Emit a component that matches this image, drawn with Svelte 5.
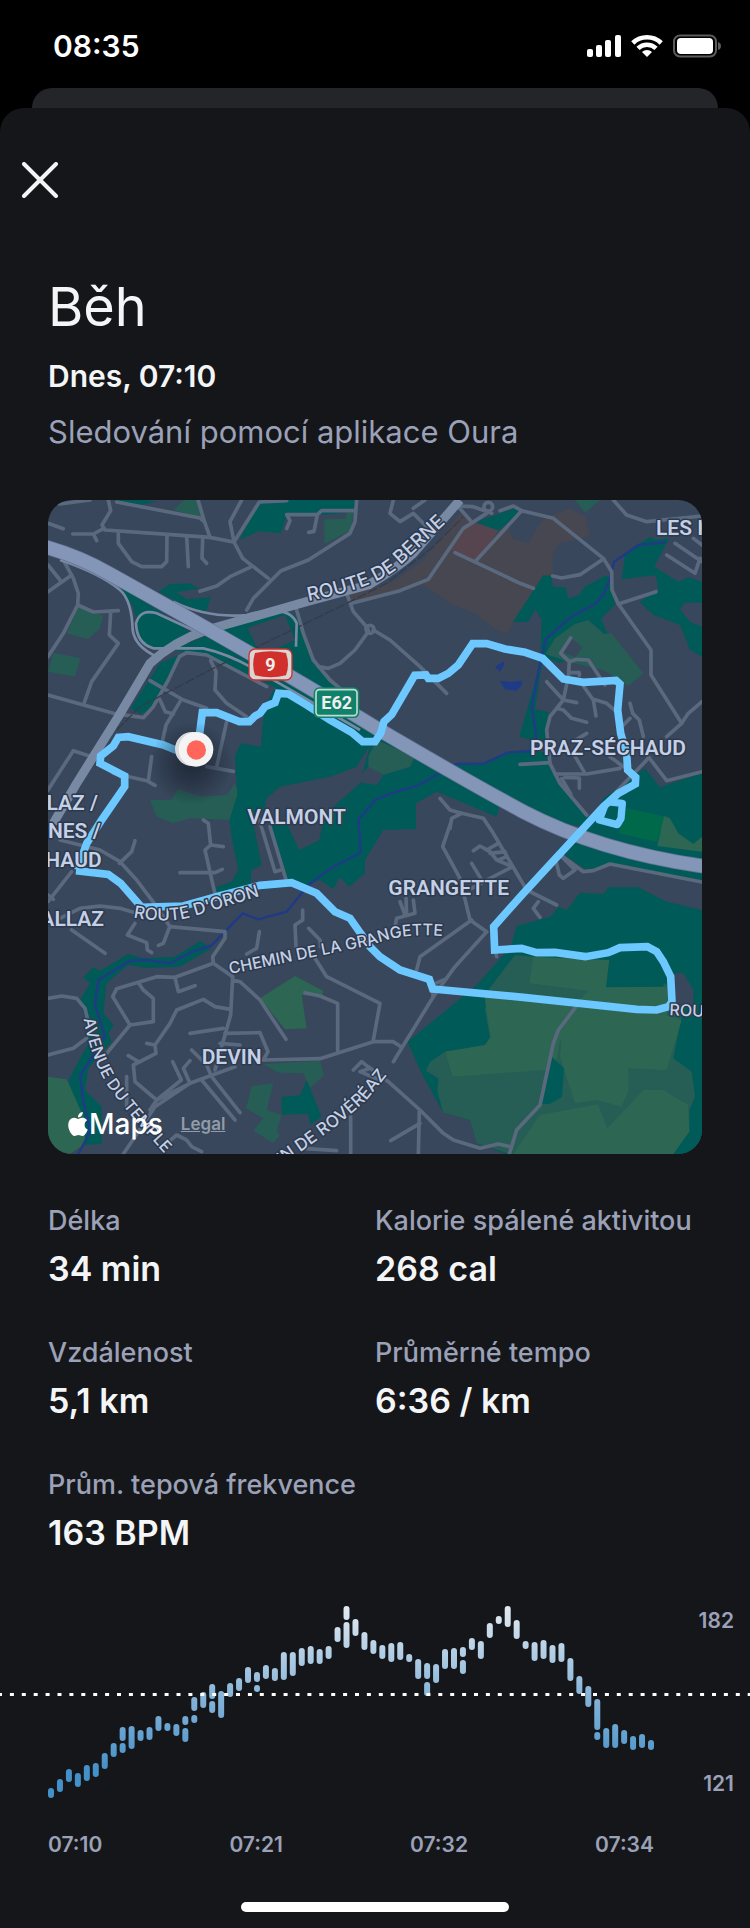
<script lang="ts">
  interface Shape {
    fill: string;
    points: string;
  }

  const stats = [
    { label: "Délka", value: "34 min" },
    { label: "Kalorie spálené aktivitou", value: "268 cal" },
    { label: "Vzdálenost", value: "5,1 km" },
    { label: "Průměrné tempo", value: "6:36 / km" },
    { label: "Prům. tepová frekvence", value: "163 BPM" },
  ];

  const times = ["07:10", "07:21", "07:32", "07:34"];

  // one entry per column, each a list of [top, bottom] ranges
  const heartRate: number[][][] = [
    [[188, 198]], [[179, 192]], [[169, 182]], [[173, 187]], [[165, 181]],
    [[163, 177]], [[153, 169]], [[143, 157]], [[127, 141], [143, 153]],
    [[126, 149]], [[130, 141]], [[127, 140]], [[116, 131]], [[123, 131]],
    [[124, 136]], [[116, 125], [128, 142]], [[97, 111], [115, 123]],
    [[92, 108]], [[84, 99], [101, 113]], [[91, 118]], [[83, 97]],
    [[78, 91]], [[67, 83]], [[72, 82], [85, 92]], [[65, 79]], [[68, 81]],
    [[52, 80]], [[52, 76]], [[48, 66]], [[46, 64]], [[49, 64]], [[46, 59]],
    [[27, 42]], [[6, 20], [22, 48]], [[19, 36]], [[32, 50]], [[40, 54]],
    [[45, 59]], [[43, 62]], [[42, 60]], [[54, 62]], [[59, 79]],
    [[63, 79], [82, 96]], [[64, 83]], [[49, 69]], [[48, 69]],
    [[47, 57], [60, 74]], [[38, 50]], [[41, 59]], [[23, 38]], [[16, 24]],
    [[6, 27]], [[20, 39]], [[41, 49]], [[42, 61]], [[40, 59]], [[45, 63]],
    [[43, 62]], [[58, 81]], [[76, 94]], [[86, 107]], [[99, 130], [132, 140]],
    [[128, 148]], [[124, 148]], [[130, 144]], [[136, 150]], [[134, 148]],
    [[140, 150]],
  ];
  const columnX = (i: number) => 48 + (i * 600) / (heartRate.length - 1);

  const LAND = "#38475c";
  const WOOD = "#005b58";
  const PARK = "#265d55";
  const FIELD = "#2d6653";
  const BUILT = "#464750";

  const areas: Shape[] = [
    { fill: WOOD, points: "598,150 658,36 700,30 946,30 940,66 850,74 742,74 722,130 655,124" },
    { fill: PARK, points: "853,88 918,86 920,70 940,66 935,120 853,162" },
    { fill: PARK, points: "400,60 432,30 474,30 490,84" },
    { fill: WOOD, points: "220,30 310,30 352,36 300,44" },
    { fill: WOOD, points: "355,305 390,282 450,280 478,296 512,322 498,366 430,345" },
    { fill: LAND, points: "410,306 478,296 512,322 440,328" },
    { fill: WOOD, points: "205,275 300,325 450,425 400,470 330,475 300,450 280,350 250,310" },
    { fill: WOOD, points: "400,480 545,415 740,360 772,385 800,460 830,530 880,585 1000,690 1010,770 960,745 720,600 640,560 510,500" },
    { fill: LAND, points: "622,414 735,375 765,450 700,480 650,470" },
    { fill: WOOD, points: "360,520 425,490 395,560 325,660 300,672 272,655" },
    { fill: PARK, points: "115,350 155,370 190,375 180,415 145,447 80,430" },
    { fill: PARK, points: "40,488 122,505 105,560 24,545" },
    { fill: PARK, points: "330,930 395,930 415,898 480,920 560,915 585,880 600,930 570,990 450,985 400,1000 350,980" },
    { fill: WOOD, points: "700,600 760,605 1000,740 1130,800 1380,945 1370,980 1190,905 1128,940 1128,1017 1030,1020 975,1110 975,1150 928,1190 898,1162 880,1198 840,1170 800,1185 530,1212 530,1190 575,1175 595,1140 575,1045 568,990 592,915 584,800 602,760 662,770 672,660" },
    { fill: LAND, points: "672,960 680,925 720,890 870,860 950,830 990,765 960,880 880,950 848,1000 838,1050 778,1080 735,990 690,1000 738,1170 632,1185 635,1140 665,1125 640,1000" },
    { fill: PARK, points: "985,800 1010,750 1125,800 1110,830 1030,855 985,835" },
    { fill: LAND, points: "985,830 1030,855 1010,885 950,875 960,860" },
    { fill: WOOD, points: "1130,825 1250,825 1340,820 1400,785 1475,780 1520,790 1560,880 1650,985 1640,1010 1560,1000 1370,940" },
    { fill: WOOD, points: "1500,255 1535,257 1538,290 1578,292 1584,325 1616,316 1634,290 1694,258 1715,260 1725,345 1684,385 1702,432 1560,520 1510,500 1485,658 1525,665 1516,790 1500,756 1438,740 1500,520 1505,390 1486,358 1465,396 1418,396" },
    { fill: PARK, points: "1516,492 1545,445 1605,402 1645,390 1692,432 1714,430 1810,550 1765,588 1690,540 1600,520" },
    { fill: LAND, points: "1562,484 1593,444 1628,472 1606,502" },
    { fill: WOOD, points: "1745,268 1755,190 1830,140 1846,150 1888,145 1843,230 1915,275 1945,262 1986,275 1986,338 1935,338 1920,358 1950,395 1986,410 1986,500 1950,480 1920,405 1840,375 1798,335 1855,302 1847,256" },
    { fill: BUILT, points: "925,315 1060,275 1150,210 1260,70 1310,95 1375,120 1405,110 1416,146 1466,160 1500,100 1530,78 1590,55 1636,80 1650,138 1560,160 1538,190 1538,257 1510,255 1418,396 1404,432 1360,415 1310,372 1240,345 1150,285 1080,305 930,340" },
    { fill: "#56454f", points: "1234,178 1290,95 1375,120 1310,215" },
    { fill: WOOD, points: "1306,96 1430,53 1445,62 1375,122" },
    { fill: PARK, points: "1605,30 1680,30 1636,68" },
    { fill: WOOD, points: "1690,925 1815,835 1860,892 1986,850 1986,1170 1710,1125 1640,1140 1550,1080 1660,980" },
    { fill: "#00694a", points: "1760,955 1875,980 1850,1055 1735,1030" },
    { fill: FIELD, points: "1872,978 1890,985 1915,1030 1960,1062 1986,1040 1986,1085 1852,1068" },
    { fill: WOOD, points: "1102,1656 1310,1485 1412,1370 1430,1308 1530,1280 1556,1250 1580,1260 1620,1208 1690,1212 1705,1192 1795,1192 1880,1235 1986,1260 1986,1992 1400,1992 1310,1960 1290,1890 1210,1868 1150,1760" },
    { fill: PARK, points: "1345,1500 1425,1395 1600,1410 1710,1410 1895,1490 1925,1580 1900,1705 1955,1745 1965,1820 1948,1860 1948,1920 1900,1992 1410,1992 1310,1960 1290,1890 1210,1868 1192,1805 1195,1765 1158,1742 1170,1715 1215,1685 1340,1665 1350,1640 1335,1560" },
    { fill: FIELD, points: "1333,1515 1600,1550 1597,1640 1560,1650 1545,1738 1238,1760 1216,1685 1335,1665 1352,1640" },
    { fill: FIELD, points: "1600,1550 1880,1575 1925,1590 1880,1740 1765,1735 1766,1800 1745,1850 1670,1830 1605,1840 1560,1700 1565,1645 1595,1640" },
    { fill: FIELD, points: "1420,1992 1500,1875 1674,1843 1702,1915 1810,1800 1870,1800 1944,1845 1948,1925 1900,1992" },
    { fill: FIELD, points: "1480,1400 1708,1410 1700,1490 1885,1490 1880,1575 1610,1540 1645,1502 1468,1480" },
    { fill: WOOD, points: "1708,1410 1850,1408 1875,1450 1870,1490 1698,1492" },
    { fill: WOOD, points: "1535,1700 1572,1735 1566,1820 1530,1842 1500,1842" },
    { fill: LAND, points: "1880,1452 1930,1449 1960,1500 1960,1545 1885,1545" },
    { fill: WOOD, points: "515,1375 420,1430 320,1434 265,1425 200,1480 190,1570 222,1605 205,1630 215,1655 185,1690 145,1735 135,1800 185,1850 185,1962 135,1965 85,1770 145,1660 140,1600 120,1530 150,1480 130,1462 160,1432 180,1442 265,1392 310,1405 405,1400 480,1353" },
    { fill: FIELD, points: "24,1760 80,1768 135,1890 135,1962 90,1992 24,1992" },
    { fill: FIELD, points: "660,1525 765,1458 850,1503 845,1520 785,1515 800,1615 735,1618" },
    { fill: PARK, points: "670,1722 840,1712 852,1755 810,1795 790,1750 715,1748" },
    { fill: PARK, points: "635,1788 700,1780 680,1860 725,1875 710,1925 720,1935 700,1960 640,1922 670,1885 618,1855" },
    { fill: WOOD, points: "725,1820 780,1816 800,1770 845,1880 810,1905 805,1872 725,1874" },
    { fill: "#1f3a87", points: "1365,530 1392,514 1392,526 1380,546" },
    { fill: "#1f3a87", points: "1380,572 1412,576 1447,572 1445,586 1430,602 1395,598" },
  ];

  const rivers = [
    "M1878 157 L1795 165 L1722 216 L1708 270 L1690 315 L1664 343 L1594 380 L1518 446 L1498 530 L1475 650 L1488 730 L1488 783 L1405 787 L1332 820 L1250 822 L1130 888 L1050 911 L1005 930 L955 990 L962 1088 L880 1130 L805 1185 L740 1265 L655 1288 L608 1270 L515 1366 L460 1384 L390 1420 L320 1410 L270 1412 L175 1470 L165 1545 L195 1640 L120 1757 L130 1835 L150 1925 L115 1992",
  ];

  const streets = [
    "M24 30 L60 42 L150 30", "M205 30 L212 62 L186 105 L195 120 L340 130 L510 142 L580 156",
    "M98 132 L160 132 L190 116 M160 132 L170 152", "M24 100 L70 116",
    "M230 36 L480 84 L492 95 M474 30 L492 90 L510 142",
    "M235 130 L235 160 L275 215 L305 230 L365 230 L380 215 L381 140 M440 140 L445 230 M488 148 L486 205 L500 220",
    "M605 30 L570 95 L582 156 L658 36 L740 32 M582 156 L608 205 L685 265 M480 304 L530 288 L570 260 L630 232",
    "M620 360 L640 325 L722 243 L805 210 L930 130 L945 95 L950 30",
    "M740 116 L750 92 L740 74 L832 74 L845 62 L940 62 M832 74 L822 124 L806 127",
    "M24 225 L60 270 M70 210 L100 265 L115 310 L113 345 L70 430 L24 500 M24 305 L95 255",
    "M113 345 L160 366 L235 362 M212 366 L208 435 L235 460 L155 575 L132 640",
    "M24 615 L220 670 L310 683 L340 650 L385 570 L418 500 L440 488",
    "M330 572 L430 630 L500 655 M360 630 L376 665 L400 672 M420 635 L378 705 L368 750",
    "M440 488 L500 495 L680 590 M512 512 L528 545 L525 600 L560 640 L620 680",
    "M560 695 L530 830 M500 830 L580 844 M24 900 L100 782 L155 800",
    "M220 850 L320 872 L345 886 M335 800 L325 872",
    "M770 360 L790 430 L820 510 L870 570 L905 600 M835 530 L865 535 L900 520 L945 480 L985 425 M920 310 L940 365 L975 405 L985 420",
    "M1000 420 L1050 450 L1140 530 L1220 610",
    "M935 340 L1080 302 L1165 268 L1270 115 L1340 70 M1255 50 L1290 90",
    "M1245 188 L1360 242 L1440 280 L1480 295 M1305 215 L1445 62 L1540 85 L1690 205 L1715 245 L1716 300 L1735 342 L1833 480 L1833 555 L1925 700",
    "M1538 258 L1565 264 L1620 254 L1690 207 M1735 342 L1848 305",
    "M1060 30 L1050 70 L1080 95 L1120 70 L1170 120 M1120 55 L1155 30 M1380 62 L1420 48 L1445 62",
    "M1355 70 L1300 50 L1255 48 M1720 30 L1760 75 L1820 95 L1986 78",
    "M1880 195 L1965 250 L1980 205 M1905 160 L1986 215 M1960 145 L1986 165",
    "M1925 700 L1880 740 M1925 700 L1945 670 L1986 635 M1825 800 L1880 872 L1986 845",
    "M1592 444 L1562 490 L1588 515 L1585 560 L1570 630 L1530 680 L1520 720 L1530 820 L1560 880 L1640 975",
    "M1588 515 L1610 508 L1645 510 L1695 585 M1588 548 L1618 548 L1618 556",
    "M1520 575 L1570 630 L1610 638 M1550 655 L1570 660 L1595 685 L1640 697 M1630 588 L1660 630 L1668 678 M1660 628 L1700 640 L1735 670",
    "M1770 640 L1778 670 L1798 690 L1810 740 M1640 730 L1600 755 M1770 685 L1740 715",
    "M1710 800 L1750 830 M1600 790 L1635 850 M1545 852 L1640 852 L1740 835 M1440 823 L1530 818",
    "M1565 866 L1592 912 M1575 862 L1618 864 L1618 895 M1825 805 L1700 935",
    "M1200 925 L1230 960 L1265 970 L1330 985 L1360 1030 L1460 1200 L1550 1245 M1495 1235 L1480 1255 L1500 1282",
    "M1230 1015 L1235 985 L1265 970 M1235 990 L1208 1070 L1260 1165 L1290 1290 L1340 1325",
    "M1300 1082 L1320 1068 L1350 1085 L1370 1110 L1418 1130 L1350 1165 L1295 1195 M1295 1120 L1325 1170 M1340 1080 L1375 1060 M1350 1090 L1395 1085 L1400 1100 L1375 1110",
    "M1080 1235 L1095 1275 M1098 1225 L1100 1275 M1120 1230 L1125 1270 L1070 1285 L1065 1310",
    "M1545 1100 L1558 1155 L1570 1165 L1605 1140 L1560 1095 M1555 1090 L1630 1145 L1660 1142 L1710 1122 L1986 1176",
    "M1370 1400 L1365 1380 M1340 1325 L1245 1430 L1180 1520 L1100 1650 L1060 1715 M1295 1290 L1140 1400 L1130 1440",
    "M490 990 L505 1000 L512 1065 L550 1070 M512 1065 L495 1080 L525 1212 M420 1148 L525 1148 L547 1138",
    "M658 990 L705 1145 L722 1140 M690 1010 L740 1175",
    "M285 1052 L275 1085 L238 1120 M180 1080 L240 1115 L290 1170 L350 1250 L390 1310 M60 1050 L180 1080",
    "M24 1235 L95 1145 M24 1215 L40 1228 M60 1285 L120 1255 L180 1248 L240 1255 L285 1268 M95 1320 L195 1390",
    "M285 1300 L262 1335 L320 1358 L322 1380 L335 1388 M390 1308 L370 1360 L355 1366 M390 1310 L555 1325 L555 1345 L518 1400 L520 1420 L578 1460",
    "M788 1260 L788 1290 L765 1305 L768 1370 M806 1315 L840 1350 L842 1370 M658 1325 L650 1375 L620 1392 M825 1405 L860 1460 L1020 1540 L1000 1650",
    "M520 1420 L405 1462 L350 1460 L230 1496 L218 1520 L270 1605 L340 1595 L340 1525 L310 1500 L295 1478 M405 1462 L415 1505 L465 1487 M270 1605 L200 1690",
    "M578 1460 L572 1575 L525 1740 M578 1470 L600 1475 L660 1530 L738 1648 M572 1558 L525 1550 L490 1528 L410 1560 L390 1600 L345 1665 L348 1690 L280 1725 L285 1775 L350 1830",
    "M450 1630 L550 1615 M555 1630 L660 1628 L684 1685 L670 1710 M540 1660 L600 1665 M320 1660 L345 1665 M265 1697 L295 1715",
    "M670 1710 L840 1706 L1000 1655 L1060 1655 L1085 1672 M795 1508 L840 1518 L893 1540 L893 1690",
    "M24 1525 L65 1518 L110 1525 L135 1555 L142 1585 M24 1695 L100 1675 L140 1645",
    "M455 1680 L500 1725 L515 1760 L600 1868 M485 1770 L585 1890 M585 1730 L450 1780 L345 1850 L250 1992 M330 1860 L350 1830 L450 1780",
    "M398 1715 L424 1770 L350 1830 M450 1712 L430 1735 L450 1780 M260 1760 L260 1850",
    "M380 1960 L410 1935 L440 1950 L455 1970 L485 1985 M790 1975 L890 1982 M932 1880 L932 1992",
    "M940 1740 L965 1715 L990 1735 L960 1745 L1020 1770 M985 1730 L1045 1775 L1140 1860 L1210 1930 L1240 1950 L1320 1975 L1375 1962 L1410 1970 M1138 1865 L1135 1992 M1140 1900 L1052 1952",
    "M1608 1550 L1555 1620 L1540 1660 L1500 1845 L1430 1920 L1408 1992",
    "M1180 1520 L1175 1485 L1215 1468",
  ];

  const labels = [
    { x: 622, y: 1001, anchor: "start", text: "VALMONT" },
    { x: 1470, y: 795, anchor: "start", text: "PRAZ-SÉCHAUD" },
    { x: 1045, y: 1215, anchor: "start", text: "GRANGETTE" },
    { x: 485, y: 1722, anchor: "start", text: "DEVIN" },
    { x: 1848, y: 135, anchor: "start", text: "LES I" },
    { x: 174, y: 960, anchor: "end", text: "LAZ /" },
    { x: 182, y: 1044, anchor: "end", text: "NES /" },
    { x: 185, y: 1131, anchor: "end", text: "HAUD" },
    { x: 192, y: 1307, anchor: "end", text: "ALLAZ" },
  ];

  const roadNames = [
    { id: "berne", size: 57, d: "M805 333 Q985 298 1060 245 L1260 60", text: "ROUTE DE BERNE" },
    { id: "oron", size: 51, d: "M280 1282 Q390 1304 470 1276 L720 1200", text: "ROUTE D'ORON" },
    { id: "grangette", size: 48, d: "M570 1452 L1000 1364 Q1120 1315 1300 1352", text: "CHEMIN DE LA GRANGETTE" },
    { id: "temple", size: 48, d: "M131 1586 Q150 1700 205 1790 Q270 1880 410 2030", text: "AVENUE DU TEMPLE" },
    { id: "rovereaz", size: 51, d: "M725 2024 Q890 1915 980 1830 L1120 1660", text: "IN DE ROVÉRÉAZ" },
    { id: "rou", size: 48, d: "M1888 1576 L2090 1584", text: "ROU" },
  ];
</script>

<div class="screen">
  <header class="status">
    <span class="clock">08:35</span>
    <div class="status-icons">
      <svg width="34" height="24" viewBox="0 0 34 24" fill="#fff" aria-hidden="true">
        <rect x="0" y="15" width="6" height="8" rx="2" />
        <rect x="9" y="11" width="6" height="12" rx="2" />
        <rect x="18" y="6" width="6" height="17" rx="2" />
        <rect x="28" y="1" width="6" height="22" rx="2" />
      </svg>
      <svg width="32" height="24" viewBox="0 0 32 24" aria-hidden="true">
        <g fill="none" stroke="#fff" stroke-width="4.6">
          <path d="M1.8 9 A20.4 20.4 0 0 1 30.2 9" />
          <path d="M7 14.4 A13 13 0 0 1 25 14.4" />
        </g>
        <path fill="#fff" d="M16 23 L11 18 A7.2 7.2 0 0 1 21 18 Z" />
      </svg>
      <svg width="49" height="24" viewBox="0 0 49 24" aria-hidden="true">
        <rect x="1" y="1.5" width="42" height="21" rx="6" fill="none" stroke="#5c5c5e" stroke-width="2" />
        <rect x="4" y="4" width="36" height="16" rx="4" fill="#fff" />
        <path fill="#5c5c5e" d="M45 8 Q48 9 48 12 T45 16 Z" />
      </svg>
    </div>
  </header>

  <div class="sheet-behind"></div>

  <main class="sheet">
    <button class="close" aria-label="Zavřít">
      <svg width="36" height="36" viewBox="0 0 36 36" aria-hidden="true">
        <path d="M2 2 L34 34 M34 2 L2 34" stroke="#f4f5f7" stroke-width="4" stroke-linecap="round" />
      </svg>
    </button>

    <section class="intro">
      <h1>Běh</h1>
      <p class="when">Dnes, 07:10</p>
      <p class="source">Sledování pomocí aplikace Oura</p>
    </section>

    <div class="map">
      <svg viewBox="24 30 1962 1962" role="img" aria-label="Mapa trasy">
        <defs>
          <radialGradient id="pin-shadow">
            <stop offset="0.2" stop-color="#141c28" stop-opacity="0.6" />
            <stop offset="1" stop-color="#141c28" stop-opacity="0" />
          </radialGradient>
        </defs>
        <rect x="24" y="30" width="1962" height="1962" fill={LAND} />
        {#each areas as area}
          <polygon points={area.points} fill={area.fill} />
        {/each}

        <g fill="none" stroke-linejoin="round">
          {#each rivers as d}
            <path {d} stroke="#1f3a87" stroke-width="7" />
          {/each}
          <g stroke="#5b697e" stroke-width="11" stroke-linecap="round">
            {#each streets as d}
              <path {d} />
            {/each}
            <circle cx="990" cy="418" r="12" />
            <circle cx="1345" cy="50" r="13" />
          </g>
          <path d="M230 720 L300 650 L520 535 L920 340 L1040 280 L1180 170 L1270 80" stroke="#343b49" stroke-width="4" stroke-dasharray="30 6" />

          <!-- Route de Berne -->
          <path d="M40 1000 L110 880 L235 680 L330 520 Q400 455 500 420 L800 335 L985 285 Q1070 235 1120 190 L1260 30" stroke="#7889a4" stroke-width="27" />
          <!-- slip roads -->
          <g stroke="#7889a4" stroke-width="8">
            <path d="M60 210 Q180 250 240 300 Q275 330 278 420 Q285 470 350 500" />
            <path d="M470 425 L350 370 Q300 355 288 400 Q290 460 340 475 L490 475 Q560 490 640 535 L960 720" />
            <path d="M400 335 Q500 385 620 375 Q745 340 770 400 L768 470" />
            <path d="M520 420 L740 545" />
          </g>
          <!-- A9 -->
          <path d="M14 170 Q120 200 210 252 Q700 525 1010 715 Q1300 885 1450 965 Q1680 1085 2000 1130" stroke="#66779a" stroke-width="44" />
          <path d="M14 170 Q120 200 210 252 Q700 525 1010 715 Q1300 885 1450 965 Q1680 1085 2000 1130" stroke="#8496b8" stroke-width="39" />

          <!-- recorded run -->
          <path
            d="M475 760 L487 668 L530 668 L598 695 L628 695 L645 678 L660 670 L675 650 L705 638 L715 610 L745 612 L800 645 L870 690 L935 727 L968 755 L1005 755 L1022 730 L1032 695 L1055 674 L1124 556 L1158 555 L1165 565 L1195 565 L1225 550 L1255 525 L1298 461 L1340 461 L1395 477 L1455 487 L1508 505 L1570 567 L1630 577 L1728 571 L1740 582 L1733 660 L1742 730 L1760 790 L1763 840 L1787 862 L1786 882 L1735 910 L1690 950 L1450 1210 L1361 1310 L1364 1380 L1445 1375 L1490 1388 L1545 1387 L1636 1400 L1705 1388 L1740 1373 L1822 1370 L1850 1385 L1870 1415 L1892 1460 L1896 1535 L1885 1550 L1850 1560 L1790 1558 L1450 1522 L1178 1497 L1168 1468 L1080 1440 L1020 1400 L990 1370 L930 1285 L885 1265 L830 1210 L755 1178 L660 1186 L540 1217 L430 1248 L305 1252 L242 1180 L205 1153 L108 1142"
            stroke="#6cc8ff" stroke-width="23" stroke-linejoin="miter" />
          <path d="M112 1140 L140 1060 L185 990 L254 890 L254 858 L180 820 L182 798 L220 768 L235 742 L265 740 L370 765 L430 790" stroke="#6cc8ff" stroke-width="23" stroke-linejoin="miter" />
          <path d="M1695 945 L1678 990 L1732 1004 L1743 986 L1747 940 L1700 935" stroke="#6cc8ff" stroke-width="22" />
        </g>

        <circle cx="455" cy="820" r="125" fill="url(#pin-shadow)" />
        <circle cx="456" cy="777" r="51" fill="#d9d9dc" />
        <circle cx="468" cy="778" r="52" fill="#f4f4f5" />
        <circle cx="469" cy="780" r="29" fill="#ff655a" />

        <g class="road-names">
          {#each roadNames as road}
            <path id={road.id} d={road.d} fill="none" />
            <text font-size={road.size}><textPath href={"#" + road.id}>{road.text}</textPath></text>
          {/each}
        </g>
        <g class="places">
          {#each labels as label}
            <text x={label.x} y={label.y} text-anchor={label.anchor}>{label.text}</text>
          {/each}
        </g>

        <rect x="627" y="477" width="129" height="93" rx="18" fill="#d9d5d3" stroke="#c9302f" stroke-width="4" />
        <path d="M645 489 Q691 478 738 489 Q750 524 738 556 Q691 568 645 556 Q634 524 645 489 Z" fill="#d02f2b" />
        <text class="shield" x="691" y="542" text-anchor="middle">9</text>
        <rect x="821" y="592" width="137" height="92" rx="16" fill="#10816a" />
        <rect x="828" y="599" width="123" height="78" rx="10" fill="#10816a" stroke="#c4d9cd" stroke-width="5" />
        <text class="shield" x="890" y="656" text-anchor="middle">E62</text>
      </svg>
      <div class="attribution">
        <span class="brand">
          <svg width="20" height="24" viewBox="2 0 20 24" fill="#fff" aria-hidden="true">
            <path d="M12.152 6.896c-.948 0-2.415-1.078-3.96-1.04-2.04.027-3.91 1.183-4.961 3.014-2.117 3.675-.546 9.103 1.519 12.09 1.013 1.454 2.208 3.09 3.792 3.039 1.52-.065 2.09-.987 3.935-.987 1.831 0 2.35.987 3.96.948 1.637-.026 2.676-1.48 3.676-2.948 1.156-1.688 1.636-3.325 1.662-3.415-.039-.013-3.182-1.221-3.22-4.857-.026-3.04 2.48-4.494 2.597-4.559-1.429-2.09-3.623-2.324-4.39-2.376-2-.156-3.675 1.09-4.61 1.09zM15.53 3.83c.843-1.012 1.4-2.427 1.245-3.83-1.207.052-2.662.805-3.532 1.818-.78.896-1.454 2.338-1.273 3.714 1.338.104 2.715-.688 3.559-1.701" />
          </svg>
          Maps
        </span>
        <a href="#legal">Legal</a>
      </div>
    </div>

    <dl class="stats">
      {#each stats as stat}
        <div class="stat">
          <dt>{stat.label}</dt>
          <dd>{stat.value}</dd>
        </div>
      {/each}
    </dl>

    <section class="chart" aria-label="Tepová frekvence">
      <svg viewBox="0 0 750 204" aria-hidden="true">
        <defs>
          <linearGradient id="bpm" gradientUnits="userSpaceOnUse" x1="0" y1="6" x2="0" y2="170">
            <stop offset="0" stop-color="#e3eaf0" />
            <stop offset="0.25" stop-color="#b9d2e6" />
            <stop offset="0.55" stop-color="#86b4d8" />
            <stop offset="1" stop-color="#4490c8" />
          </linearGradient>
        </defs>
        {#each heartRate as ranges, i}
          {#each ranges as [top, bottom]}
            <rect x={columnX(i)} y={top} width="6" height={bottom - top} rx="3" fill="url(#bpm)" />
          {/each}
        {/each}
        <line x1="-2" y1="94.5" x2="750" y2="94.5" stroke="#fff" stroke-width="3" stroke-dasharray="4 7.9" />
      </svg>
      <div class="bounds">
        <span>182</span>
        <span>121</span>
      </div>
    </section>
    <div class="times">
      {#each times as time}
        <span>{time}</span>
      {/each}
    </div>

    <div class="home-indicator"></div>
  </main>
</div>

<style>
  :global(body) {
    margin: 0;
    background: #000;
  }
  .screen {
    background: #000;
    color: #f4f5f7;
    font-family: Inter, "Liberation Sans", sans-serif;
  }
  .status {
    display: flex;
    align-items: center;
    justify-content: space-between;
    box-sizing: border-box;
    height: 88px;
    padding: 4px 28px 0 53px;
  }
  .clock {
    font-size: 30px;
    font-weight: 600;
    color: #fff;
  }
  .status-icons {
    display: flex;
    align-items: center;
    gap: 10px;
  }
  .sheet-behind {
    height: 44px;
    margin: 0 32px -24px;
    border-radius: 20px 20px 0 0;
    background: #242529;
  }
  .sheet {
    position: relative;
    display: flex;
    flex-direction: column;
    border-radius: 24px 24px 0 0;
    background: #15161a;
  }
  .close {
    align-self: flex-start;
    display: flex;
    margin: 44px 12px 0;
    padding: 10px;
    border: none;
    background: none;
    cursor: pointer;
  }
  .intro {
    padding: 64px 48px 0;
  }
  h1 {
    margin: 0;
    font-size: 54px;
    line-height: 70px;
    font-weight: 400;
  }
  .when,
  .source {
    margin: 0;
    line-height: 56px;
  }
  .when {
    margin-top: 6px;
    font-size: 30px;
    font-weight: 600;
  }
  .source {
    font-size: 31px;
    color: #9ba1b7;
  }
  .map {
    position: relative;
    margin: 40px 48px 0;
    border-radius: 24px;
    overflow: hidden;
  }
  .map > svg {
    display: block;
    width: 100%;
    height: auto;
  }
  .places text {
    font-family: Roboto, sans-serif;
    font-size: 63px;
    font-weight: 600;
  }
  .road-names text {
    font-weight: 500;
  }
  .places text,
  .road-names text {
    fill: #c4d0e6;
    stroke: #2d394c;
    stroke-width: 9px;
    stroke-linejoin: round;
    paint-order: stroke;
  }
  .shield {
    fill: #f0efed;
    font-family: Roboto, sans-serif;
    font-size: 54px;
    font-weight: 700;
  }
  .attribution {
    position: absolute;
    left: 20px;
    bottom: 12px;
    display: flex;
    align-items: center;
    gap: 18px;
  }
  .brand {
    display: flex;
    align-items: center;
    gap: 1px;
    font-size: 28px;
    line-height: 36px;
    font-weight: 500;
    color: #fff;
  }
  .attribution a {
    font-size: 17px;
    font-weight: 600;
    color: #929ba8;
  }
  .stats {
    display: grid;
    grid-template-columns: 1fr 1fr;
    row-gap: 36px;
    margin: 0;
    padding: 43px 48px 0;
  }
  .stat {
    white-space: nowrap;
  }
  dt {
    font-size: 27px;
    line-height: 48px;
    font-weight: 500;
    color: #9ba1b7;
  }
  dd {
    margin: 0;
    font-size: 34px;
    line-height: 48px;
    font-weight: 600;
  }
  .chart {
    display: grid;
    margin-top: 43px;
  }
  .chart > * {
    grid-area: 1 / 1;
  }
  .chart svg {
    width: 100%;
    height: auto;
  }
  .bounds {
    display: flex;
    flex-direction: column;
    justify-content: space-between;
    align-items: flex-end;
    padding: 9px 16px 8px 0;
  }
  .bounds,
  .times {
    font-size: 21px;
    line-height: 24px;
    font-weight: 600;
    color: #9ba1b7;
  }
  .times {
    display: flex;
    justify-content: space-between;
    margin-top: 29px;
    padding: 0 96px 0 48px;
  }
  .home-indicator {
    align-self: center;
    width: 268px;
    height: 10px;
    margin: 45px 0 16px;
    border-radius: 5px;
    background: #fff;
  }
</style>
